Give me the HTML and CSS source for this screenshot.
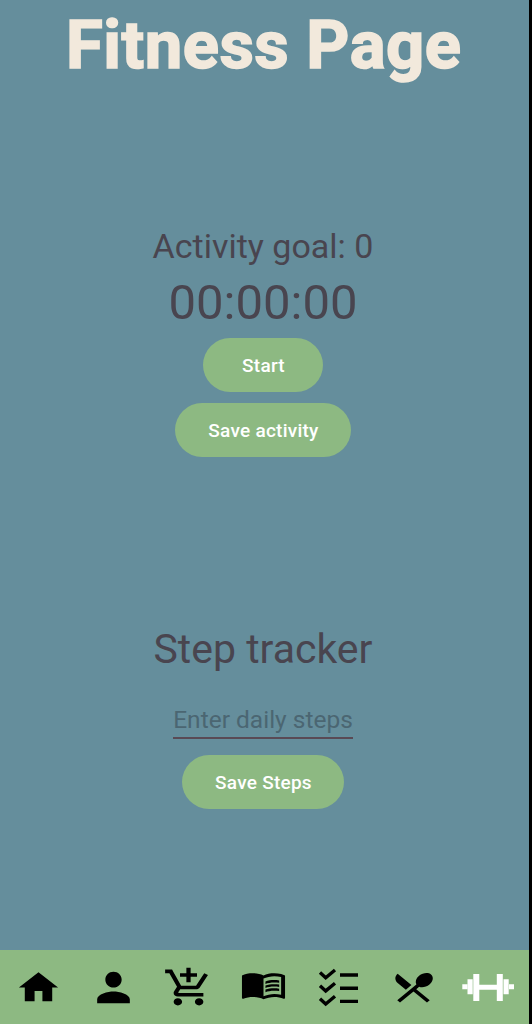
FILE: index.html
```html
<!DOCTYPE html>
<html lang="en">
<head>
<meta charset="utf-8">
<title>Fitness Page</title>
<link rel="stylesheet" href="styles.css">
</head>
<body>
<div class="screen">
  <main class="content">
    <h1 class="title">Fitness Page</h1>
    <section class="activity">
      <p class="goal">Activity goal: 0</p>
      <p class="timer">00:00:00</p>
      <button class="btn btn-start">Start</button>
      <button class="btn btn-activity">Save activity</button>
    </section>
    <section class="steps">
      <h2 class="steps-title">Step tracker</h2>
      <input class="steps-input" type="text" placeholder="Enter daily steps">
      <button class="btn btn-steps">Save Steps</button>
    </section>
  </main>
  <nav class="nav">
    <a class="nav-item"><svg width="47" height="41" viewBox="0 0 24 24" preserveAspectRatio="none"><path d="M10 20v-6h4v6h5v-8h3L12 3 2 12h3v8z"/></svg></a>
    <a class="nav-item"><svg width="49" height="47" viewBox="0 0 24 24" preserveAspectRatio="none"><path d="M12 12c2.21 0 4-1.79 4-4s-1.79-4-4-4-4 1.79-4 4 1.79 4 4 4zm0 2c-2.67 0-8 1.34-8 4v2h16v-2c0-2.66-5.33-4-8-4z"/></svg></a>
    <a class="nav-item"><svg width="51" height="43" viewBox="0 0 24 24" preserveAspectRatio="none"><path d="M11 9h2V6h3V4h-3V1h-2v3H8v2h3v3zm-4 9c-1.1 0-1.99.9-1.99 2S5.9 22 7 22s2-.9 2-2-.9-2-2-2zm10 0c-1.1 0-1.99.9-1.99 2s.89 2 1.99 2 2-.9 2-2-.9-2-2-2zm-9.83-3.25l.03-.12.9-1.63h7.45c.75 0 1.41-.41 1.75-1.03l3.86-7.01L19.42 4h-.01l-1.1 2-2.76 5H8.53l-.13-.27L6.16 6l-.95-2-.94-2H1v2h2l3.6 7.59-1.35 2.45c-.16.28-.25.61-.25.96 0 1.1.9 2 2 2h12v-2H7.42c-.13 0-.25-.11-.25-.25z"/></svg></a>
    <a class="nav-item"><svg width="47" height="37" viewBox="0 1.8 24 24" preserveAspectRatio="none"><path d="M21 5c-1.11-.35-2.33-.5-3.5-.5-1.95 0-4.05.4-5.5 1.5-1.45-1.1-3.55-1.5-5.5-1.5S2.45 4.9 1 6v14.65c0 .25.25.5.5.5.1 0 .15-.05.25-.05C3.1 20.45 5.05 20 6.5 20c1.95 0 4.05.4 5.5 1.5 1.35-.85 3.8-1.5 5.5-1.5 1.65 0 3.35.3 4.75 1.05.1.05.15.05.25.05.25 0 .5-.25.5-.5V6c-.6-.45-1.25-.75-2-1zm0 13.5c-1.1-.35-2.3-.5-3.5-.5-1.7 0-4.15.65-5.5 1.5V8c1.35-.85 3.8-1.5 5.5-1.5 1.2 0 2.4.15 3.5.5v11.5z"/><path d="M17.5 10.5c.88 0 1.73.09 2.5.26V9.24c-.79-.15-1.64-.24-2.5-.24-1.7 0-3.24.29-4.5.83v1.66c1.13-.64 2.7-.99 4.5-.99zM13 12.49v1.66c1.13-.64 2.7-.99 4.5-.99.88 0 1.73.09 2.5.26V11.9c-.79-.15-1.64-.24-2.5-.24-1.7 0-3.24.3-4.5.83zM17.5 14.33c-1.7 0-3.24.29-4.5.83v1.66c1.13-.64 2.7-.99 4.5-.99.88 0 1.73.09 2.5.26v-1.52c-.79-.16-1.64-.24-2.5-.24z"/></svg></a>
    <a class="nav-item"><svg width="41" height="39" viewBox="0 0 41 39"><path class="line" d="M2 4.500l5.700 5.200L17 2M2 17.700l5.700 5.200L17 15.200M2 30.800l5.700 5.200L17 28.300M22 7h18M22 20.300h18M22 33.400h18"/></svg></a>
    <a class="nav-item"><svg width="47" height="39" viewBox="0 0 24 24" preserveAspectRatio="none"><path d="M8.100 13.340l2.830-2.830L3.910 3.500c-1.560 1.560-1.560 4.090 0 5.660l4.190 4.180zm6.780-1.810c1.530.71 3.680.21 5.270-1.380 1.910-1.910 2.280-4.650.81-6.120-1.460-1.460-4.200-1.100-6.120.81-1.590 1.590-2.090 3.740-1.380 5.270L3.700 19.870l1.410 1.410L12 14.410l6.880 6.880 1.410-1.410L13.410 13l1.470-1.470z"/></svg></a>
    <a class="nav-item active"><svg width="53" height="27" viewBox="0 0 53 27"><path d="M.3 10.200h5v5h-5zM5.500 5.200h5.200v15H5.500zM11.300 0h6v27h-6zM17 10.800h18v5H17zM34.800 0h6v27h-6zM41.500 5.200h5.200v15h-5.200zM47 10.200h5v5h-5z"/></svg></a>
  </nav>
</div>
</body>
</html>
```
FILE: styles.css
```css
* {
  box-sizing: border-box;
  margin: 0;
  padding: 0;
}

body {
  background: #000;
  font-family: Roboto, sans-serif;
  color: #49454f;
}

.screen {
  display: flex;
  flex-direction: column;
  width: 529px;
  height: 1024px;
  background: #658e9c;
}

.content {
  flex: 1;
  padding-right: 3px;
}

.title {
  padding: 5px 0 0 1.5px;
  color: #f2e9dc;
  font-size: 67px;
  font-weight: 700;
  line-height: 80px;
  letter-spacing: 0.5px;
  text-align: center;
  white-space: nowrap;
  -webkit-text-stroke: 1.6px #f2e9dc;
}

.activity,
.steps {
  display: flex;
  flex-direction: column;
  align-items: center;
}

.activity {
  padding-top: 141px;
}

.goal {
  font-size: 34px;
  line-height: 40px;
}

.timer {
  margin-top: 9px;
  font-size: 49px;
  line-height: 56px;
}

.btn {
  height: 54px;
  border: 0;
  border-radius: 27px;
  background: #8db982;
  color: #fff;
  font: 500 19px/54px Roboto, sans-serif;
  letter-spacing: 0.25px;
  padding: 1px 0 0 1px;
}

.btn-start {
  width: 120px;
  margin-top: 7px;
}

.btn-activity {
  width: 176px;
  margin-top: 11px;
}

.steps {
  padding-top: 168px;
}

.steps-title {
  font-size: 41px;
  font-weight: 400;
  line-height: 48px;
}

.steps-input {
  width: 180px;
  height: 40px;
  margin-top: 26px;
  padding-top: 2px;
  border: 0;
  border-bottom: 2px solid #594a55;
  border-radius: 0;
  background: transparent;
  font: 400 24.5px/36px Roboto, sans-serif;
  text-align: center;
}

.steps-input::placeholder {
  color: #4b6672;
  opacity: 1;
}

.btn-steps {
  width: 162px;
  margin-top: 16px;
}

.nav {
  display: flex;
  align-items: center;
  height: 74.5px;
  padding: 1px 3px 0 1px;
  background: #8db982;
}

.nav-item {
  display: flex;
  flex: 0 0 75px;
  justify-content: center;
}

.nav-item svg {
  flex: none;
  fill: #000;
}

.nav-item .line {
  fill: none;
  stroke: #000;
  stroke-width: 3.4;
}

.nav-item.active svg {
  fill: #fff;
}
```
